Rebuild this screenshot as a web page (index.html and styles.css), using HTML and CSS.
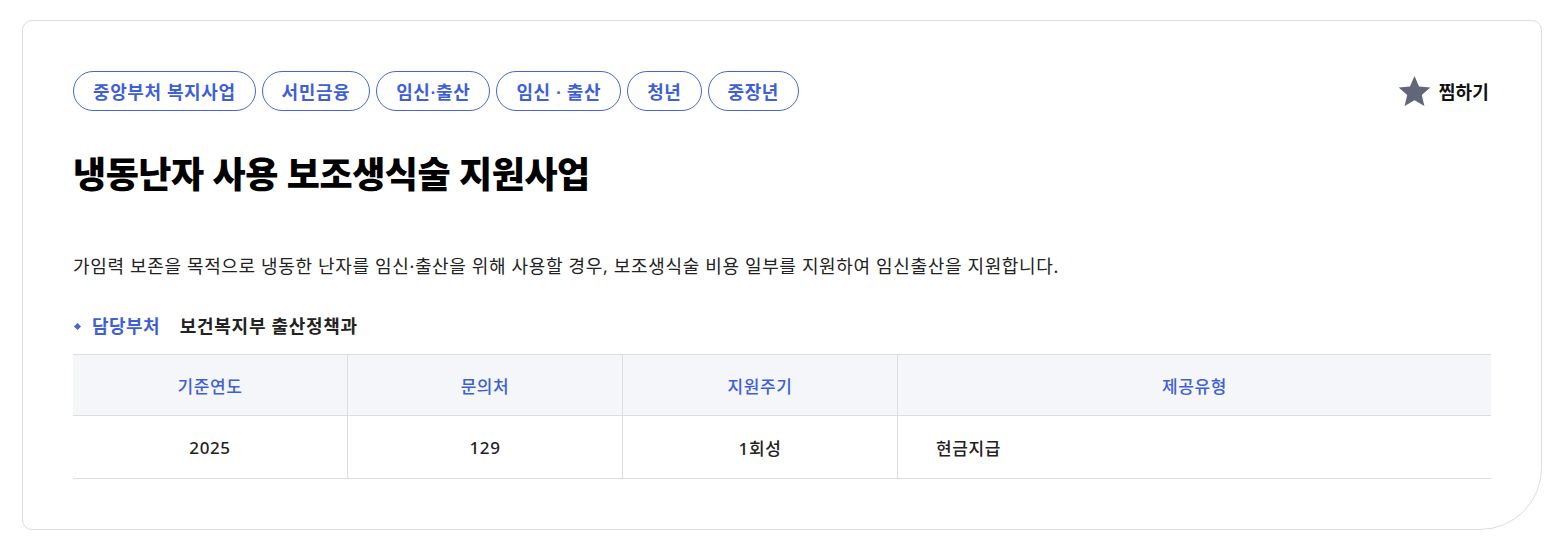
FILE: index.html
```html
<!DOCTYPE HTML>
<html>
<head>
    <title>냉동난자 사용 보조생식술 지원사업</title>
    <link rel="stylesheet" href="styles.css">
</head>
<body>
    <div class="wrap">
        <div class="card">
            <div class="topRow">
                <div class="tags">
                    <span class="tag">중앙부처 복지사업</span>
                    <span class="tag">서민금융</span>
                    <span class="tag">임신·출산</span>
                    <span class="tag">임신 · 출산</span>
                    <span class="tag">청년</span>
                    <span class="tag">중장년</span>
                </div>
                <button class="likeBtn">
                    <svg class="star" width="33" height="33" viewBox="0 0 24 24">
                        <path d="M12 .8l3.3 7.6 8.2.7-6.2 5.4 1.9 8.1L12 18.3l-7.2 4.3 1.9-8.1L.5 9.1l8.2-.7z" fill="#62667b"/>
                    </svg>
                    찜하기
                </button>
            </div>

            <h1 class="title">냉동난자 사용 보조생식술 지원사업</h1>

            <p class="desc">가임력 보존을 목적으로 냉동한 난자를 임신·출산을 위해 사용할 경우, 보조생식술 비용 일부를 지원하여 임신출산을 지원합니다.</p>

            <div class="dept">
                <span class="deptLabel">담당부처</span>
                <span class="deptValue">보건복지부 출산정책과</span>
            </div>

            <table class="infoTable">
                <tr>
                    <th class="col">기준연도</th>
                    <th class="col">문의처</th>
                    <th class="col">지원주기</th>
                    <th>제공유형</th>
                </tr>
                <tr>
                    <td>2025</td>
                    <td>129</td>
                    <td>1회성</td>
                    <td class="left">현금지급</td>
                </tr>
            </table>
        </div>
    </div>
</body>
</html>
```

FILE: styles.css
```css
body {
    margin: 0;
    background-color: #ffffff;
    font-family: "Noto Sans", "Noto Sans CJK KR", sans-serif;
    color: #111111;
}

.wrap {
    padding: 20px 25px 0 22px;
}

.card {
    border: 1px solid #dddddd;
    border-radius: 10px 10px 62px 10px;
    padding: 50px 50px 50px 50px;
}

.topRow {
    display: flex;
    justify-content: space-between;
    align-items: center;
}

.tags {
    display: flex;
    gap: 6px;
}

.tag {
    display: inline-flex;
    align-items: center;
    height: 38px;
    padding: 0 19px;
    border: 1px solid #4565d8;
    border-radius: 20px;
    color: #3f5fd6;
    font-size: 18px;
    font-weight: 600;
    letter-spacing: 0.6px;
}

.likeBtn {
    display: flex;
    align-items: center;
    gap: 8px;
    border: none;
    background: none;
    padding: 0 2px 0 0;
    font-family: inherit;
    font-size: 18px;
    font-weight: 700;
    letter-spacing: 0.2px;
    color: #111111;
    cursor: pointer;
}

.title {
    margin: 40px 0 0 0;
    font-size: 36px;
    line-height: 48px;
    font-weight: 800;
    letter-spacing: -0.45px;
    color: #000000;
}

.desc {
    margin: 53px 0 0 0;
    font-size: 18px;
    line-height: 28px;
    letter-spacing: 0.65px;
    color: #222222;
}

.dept {
    margin-top: 32px;
    display: flex;
    align-items: center;
    font-size: 18px;
    line-height: 28px;
    font-weight: 600;
    letter-spacing: 0.4px;
}

.deptLabel {
    position: relative;
    padding-left: 19px;
    color: #3f5fd6;
    margin-right: 20px;
}

.deptLabel::before {
    content: "";
    position: absolute;
    left: 2px;
    top: 12px;
    width: 5px;
    height: 5px;
    background-color: #4565d8;
    transform: rotate(45deg);
}

.deptValue {
    color: #222222;
    letter-spacing: 0.7px;
}

.infoTable {
    margin-top: 14px;
    width: 100%;
    border-collapse: collapse;
    border-top: 1px solid #dddddd;
    font-size: 17px;
    font-weight: 500;
    letter-spacing: 0.6px;
}

.infoTable th, .infoTable td {
    border-bottom: 1px solid #dddddd;
    border-left: 1px solid #dddddd;
    text-align: center;
    padding: 0;
}

.infoTable th:first-child, .infoTable td:first-child {
    border-left: none;
}

.infoTable th {
    height: 60px;
    background-color: #f5f6fa;
    color: #3f5fd6;
    font-weight: 500;
}

.infoTable td {
    height: 62px;
    color: #222222;
}

.infoTable .col {
    width: 274px;
}

.infoTable td.left {
    text-align: left;
    padding-left: 38px;
}
```
